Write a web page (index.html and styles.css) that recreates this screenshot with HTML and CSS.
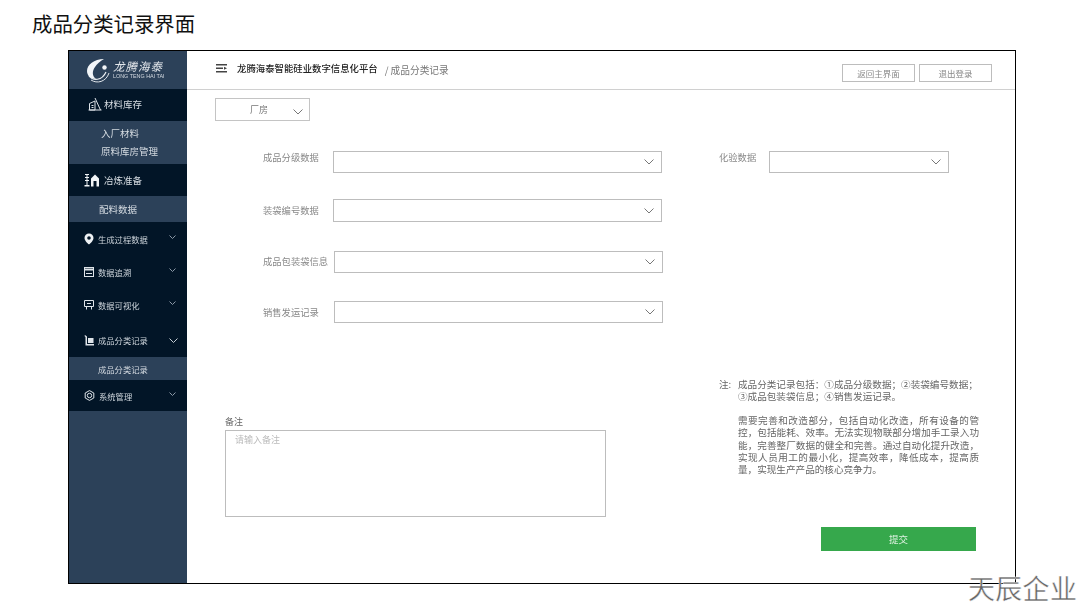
FILE: index.html
```html
<!DOCTYPE html>
<html lang="zh">
<head>
<meta charset="utf-8">
<title>成品分类记录界面</title>
<link rel="stylesheet" href="styles.css">
</head>
<body>
<h1 class="page-title">成品分类记录界面</h1>
<div class="frame">
  <aside class="sidebar">
    <div class="logo">
      <svg class="logo-mark" width="24" height="26" viewBox="0 0 24 26" fill="none">
        <path d="M18 1C8 1 1 7 1 13C1 18 5 21 10 21C6 18 6 13 9 9C11 6 14 3 18 1Z" fill="#f2f5f8"/>
        <path d="M3 18C7 23 16 23 20 14" stroke="#eef1f4" stroke-width="1.200"/>
        <path d="M5 22C11 26 20 24 23 15" stroke="#dfe4e9" stroke-width="1"/>
        <circle cx="18.500" cy="9.500" r="2.200" fill="#f2f5f8"/>
      </svg>
      <div class="logo-text">
        <div class="logo-cn">龙腾海泰</div>
        <div class="logo-en">LONG TENG HAI TAI</div>
      </div>
    </div>
    <div class="nav-head">
      <svg width="14" height="14" viewBox="0 0 14 14" fill="none" stroke="#dfe4e9" stroke-width="1"><path d="M1.500 13V6.500L7 4V13ZM0.500 13H13.500M7 1L12.500 13M3.500 8.500H5.500M3.500 10.500H5.500"/></svg>
      <span>材料库存</span>
    </div>
    <div class="nav-sub nav-sub-two">
      <div>入厂材料</div>
      <div>原料库房管理</div>
    </div>
    <div class="nav-head nav-head-b">
      <svg width="16" height="14" viewBox="0 0 16 14" fill="#f2f5f8"><path d="M1 1H5V2H1ZM1 4H5V5H1ZM1 7H5V8H1ZM0.500 12H5.500V13.500H0.500ZM2.500 2H3.500V12H2.500ZM7 5.500L11 1.500L15 5.500V13.500H12.500V8H9.500V13.500H7Z"/></svg>
      <span>冶炼准备</span>
    </div>
    <div class="nav-sub nav-sub-one">配料数据</div>
    <div class="nav-group">
      <div class="nav-item">
        <svg width="10" height="12" viewBox="0 0 10 12"><path d="M5 0.500A4.500 4.500 0 0 0 0.500 5C0.500 8 5 11.500 5 11.500S9.500 8 9.500 5A4.500 4.500 0 0 0 5 0.500ZM5 3.200A1.800 1.800 0 1 1 5 6.800A1.800 1.800 0 0 1 5 3.200Z" fill="#eef1f4" fill-rule="evenodd"/></svg>
        <span>生成过程数据</span>
        <svg class="chev" width="7" height="4" viewBox="0 0 7 4" fill="none" stroke="#8b98a6"><path d="M0.500 0.500L3.500 3.500L6.500 0.500"/></svg>
      </div>
      <div class="nav-item">
        <svg width="10" height="10" viewBox="0 0 10 10" fill="none" stroke="#dfe4e9"><rect x="0.500" y="0.500" width="9" height="9"/><path d="M0.500 2.500H9.500" stroke-width="2"/><path d="M2 6.500H8"/></svg>
        <span>数据追溯</span>
        <svg class="chev" width="7" height="4" viewBox="0 0 7 4" fill="none" stroke="#8b98a6"><path d="M0.500 0.500L3.500 3.500L6.500 0.500"/></svg>
      </div>
      <div class="nav-item">
        <svg width="10" height="10" viewBox="0 0 10 10" fill="none" stroke="#dfe4e9"><path d="M0.500 0.500H9.500V6.500H0.500ZM2.500 6.500V9.500M7.500 6.500V9.500M3 3.500H7"/></svg>
        <span>数据可视化</span>
        <svg class="chev" width="7" height="4" viewBox="0 0 7 4" fill="none" stroke="#8b98a6"><path d="M0.500 0.500L3.500 3.500L6.500 0.500"/></svg>
      </div>
      <div class="nav-item nav-item-open">
        <svg width="10" height="11" viewBox="0 0 10 11"><path d="M1 0L3 1.500V9H10V10.500H1.500V2L0.500 1ZM4 3H9.500V8H4Z" fill="#dfe4e9"/></svg>
        <span>成品分类记录</span>
        <svg class="chev chev-big" width="9" height="5" viewBox="0 0 9 5" fill="none" stroke="#c5ccd3"><path d="M0.500 0.500L4.500 4.500L8.500 0.500"/></svg>
      </div>
    </div>
    <div class="nav-sub nav-sub-current">成品分类记录</div>
    <div class="nav-group nav-group-last">
      <div class="nav-item">
        <svg width="11" height="11" viewBox="0 0 11 11" fill="none" stroke="#dfe4e9"><path d="M5.500 0.600L9.800 3V8L5.500 10.400L1.200 8V3Z"/><circle cx="5.500" cy="5.500" r="2.200"/></svg>
        <span>系统管理</span>
        <svg class="chev" width="7" height="4" viewBox="0 0 7 4" fill="none" stroke="#8b98a6"><path d="M0.500 0.500L3.500 3.500L6.500 0.500"/></svg>
      </div>
    </div>
  </aside>
  <main class="main">
    <header class="topbar">
      <svg class="menu-icon" width="11" height="9" viewBox="0 0 11 9" fill="#444"><path d="M0 0H11V1.500H0ZM0 3.500H7V5H0ZM0 7H11V8.500H0ZM8 2.800L11 4.300L8 5.700Z"/></svg>
      <span class="platform">龙腾海泰智能硅业数字信息化平台</span>
      <span class="crumb">/ 成品分类记录</span>
      <div class="top-actions">
        <button class="top-btn top-btn-a">返回主界面</button>
        <button class="top-btn top-btn-b">退出登录</button>
      </div>
    </header>
    <div class="content">
      <div class="factory">
        <span>厂房</span>
        <svg class="caret" width="10" height="6" viewBox="0 0 10 6" fill="none" stroke="#777"><path d="M0.500 0.500L5 5L9.500 0.500"/></svg>
      </div>
      <div class="form-area">
        <div class="left-fields">
          <div class="field f1"><label>成品分级数据</label><div class="select wide"><svg class="caret" width="10" height="6" viewBox="0 0 10 6" fill="none" stroke="#777"><path d="M0.500 0.500L5 5L9.500 0.500"/></svg></div></div>
          <div class="field f2"><label>装袋编号数据</label><div class="select wide"><svg class="caret" width="10" height="6" viewBox="0 0 10 6" fill="none" stroke="#777"><path d="M0.500 0.500L5 5L9.500 0.500"/></svg></div></div>
          <div class="field f3"><label>成品包装袋信息</label><div class="select wide"><svg class="caret" width="10" height="6" viewBox="0 0 10 6" fill="none" stroke="#777"><path d="M0.500 0.500L5 5L9.500 0.500"/></svg></div></div>
          <div class="field f4"><label>销售发运记录</label><div class="select wide"><svg class="caret" width="10" height="6" viewBox="0 0 10 6" fill="none" stroke="#777"><path d="M0.500 0.500L5 5L9.500 0.500"/></svg></div></div>
        </div>
        <div class="right-field">
          <label>化验数据</label>
          <div class="select narrow"><svg class="caret" width="10" height="6" viewBox="0 0 10 6" fill="none" stroke="#777"><path d="M0.500 0.500L5 5L9.500 0.500"/></svg></div>
        </div>
      </div>
      <div class="lower">
        <div class="remark">
          <div class="remark-label">备注</div>
          <div class="remark-box">请输入备注</div>
        </div>
        <div class="side-notes">
          <div class="note">
            <span class="note-mark">注:</span>
            <div class="note-body">
              <p class="note-lead">成品分类记录包括：①成品分级数据；②装袋编号数据；<br>③成品包装袋信息；④销售发运记录。</p>
              <p class="note-gap">需要完善和改造部分，包括自动化改造，所有设备的管控，包括能耗、效率。无法实现物联部分增加手工录入功能，完善整厂数据的健全和完善。通过自动化提升改造，实现人员用工的最小化，提高效率，降低成本，提高质量，实现生产产品的核心竞争力。</p>
            </div>
          </div>
          <button class="submit">提交</button>
        </div>
      </div>
    </div>
  </main>
</div>
<div class="watermark">天辰企业</div>
</body>
</html>
```
FILE: styles.css
```css
* { box-sizing: border-box; }
html, body { margin: 0; padding: 0; }
body {
  width: 1080px;
  height: 606px;
  overflow: hidden;
  position: relative;
  background: #fff;
  font-family: "Noto Sans CJK SC", "Noto Sans", sans-serif;
  color: #333;
}
.page-title {
  margin: 0;
  padding: 9px 0 0 32px;
  height: 50px;
  font-size: 20.400px;
  line-height: 28px;
  font-weight: 400;
  color: #111;
}
.frame {
  margin-left: 68px;
  width: 948px;
  height: 534px;
  border: 1px solid #000;
  display: flex;
  background: #fff;
}
.sidebar {
  width: 118px;
  flex: none;
  background: #2c4159;
  color: #d5dbe1;
  font-size: 9px;
}
.sidebar > * { filter: blur(0.3px); }
.logo {
  height: 38px;
  display: flex;
  align-items: center;
  padding-left: 17px;
  gap: 3px;
}
.logo-mark { flex: none; margin-top: 2px; }
.logo-cn {
  font-size: 11.500px;
  font-style: italic;
  line-height: 13px;
  letter-spacing: 1px;
  color: #e3e7eb;
}
.logo-en {
  font-family: "Liberation Sans", sans-serif;
  font-size: 5.400px;
  line-height: 7px;
  color: #d5dbe1;
  white-space: nowrap;
}
.nav-head {
  height: 32px;
  background: #021527;
  display: flex;
  align-items: center;
  padding: 0 0 2px 19px;
  gap: 2px;
  font-size: 9.500px;
}
.nav-head-b { padding: 0 0 0 15px; gap: 4px; }
.nav-sub { background: #2c4159; }
.nav-sub-two {
  height: 43px;
  padding: 3px 0 0 32px;
  line-height: 18px;
  font-size: 9.500px;
}
.nav-sub-one {
  height: 26px;
  padding-left: 30px;
  line-height: 26px;
  font-size: 9.500px;
}
.nav-group {
  background: #021527;
  height: 135px;
  padding-top: 1px;
}
.nav-group-last { height: 31px; padding-top: 0; }
.nav-item {
  height: 33px;
  display: flex;
  align-items: center;
  padding: 0 11px 2px 15px;
  font-size: 8.300px;
  gap: 4px;
  color: #cdd4db;
}
.nav-item span { flex: 1; min-width: 0; }
.nav-item-open { height: 36px; padding-top: 1px; padding-bottom: 1px; }
.chev { margin-bottom: 4px; }
.chev-big { margin-bottom: 0; margin-right: -2px; }
.nav-sub-current {
  height: 23px;
  padding-left: 29px;
  line-height: 24px;
  font-size: 8.300px;
}
.main {
  flex: 1;
  min-width: 0;
  display: flex;
  flex-direction: column;
}
.topbar {
  height: 39px;
  flex: none;
  display: flex;
  align-items: center;
  border-bottom: 1px solid #d0d0d0;
  padding-left: 29px;
  filter: blur(0.3px);
}
.menu-icon { flex: none; margin-right: 10px; margin-top: -3px; }
.platform {
  font-size: 9.400px;
  color: #222;
  font-weight: 500;
  margin-top: -4px;
}
.crumb {
  font-size: 9.700px;
  color: #777;
  margin-left: 7px;
  margin-top: -1px;
}
.top-actions {
  margin-left: auto;
  margin-right: 23px;
  display: flex;
  gap: 4px;
  margin-top: 5px;
}
.top-btn {
  height: 18px;
  border: 1px solid #bdbdbd;
  background: #fff;
  color: #888;
  font-family: inherit;
  font-size: 8.500px;
  padding: 0;
}
.top-btn-a { width: 73px; }
.top-btn-b { width: 73px; }
.content {
  flex: 1;
  position: relative;
  padding: 8px 0 0 28px;
  filter: blur(0.3px);
}
.factory {
  width: 95px;
  height: 23px;
  border: 1px solid #c4c4c4;
  display: flex;
  align-items: center;
  padding-left: 34px;
  font-size: 9px;
  color: #777;
}
.factory .caret { margin-left: 25px; margin-top: 4px; }
.form-area {
  display: flex;
  margin-top: 30px;
}
.left-fields { width: 484px; flex: none; margin-left: 20px; }
.field {
  display: flex;
  align-items: center;
  height: 22px;
  font-size: 9.300px;
  color: #888;
}
.field label { width: 98px; flex: none; white-space: nowrap; padding-left: 28px; }
.f1 label { margin-top: -10px; }
.f2 { margin-top: 26px; height: 23px; }
.f2 label { margin-top: -2px; }
.f3 { margin-top: 29px; }
.f4 { margin-top: 28px; }
.f3 label { width: 99px; margin-top: -2px; }
.f4 label { width: 99px; }
.select {
  height: 100%;
  border: 1px solid #bdbdbd;
  display: flex;
  align-items: center;
  justify-content: flex-end;
  background: #fff;
}
.wide { width: 329px; padding-right: 7px; }
.narrow { width: 180px; height: 22px; padding-right: 7px; }
.right-field {
  display: flex;
  align-items: flex-start;
  font-size: 9.300px;
  color: #888;
  height: 22px;
}
.right-field label { width: 50px; flex: none; line-height: 12px; }
.lower {
  display: flex;
  margin-top: 55px;
  align-items: flex-start;
}
.remark { width: 494px; flex: none; margin-left: 10px; padding-top: 39px; }
.remark-label { font-size: 9px; line-height: 9px; color: #666; height: 13px; }
.remark-box {
  width: 381px;
  height: 87px;
  border: 1px solid #bdbdbd;
  padding: 2px 9px;
  font-size: 9px;
  line-height: 14px;
  color: #bbb;
}
.side-notes { width: 258px; flex: none; }
.note { display: flex; font-size: 9.600px; line-height: 12.400px; color: #666; }
.note-mark { width: 19px; flex: none; }
.note-body { width: 241px; flex: none; }
.note-body p { margin: 0; text-align: justify; }
.note-lead { white-space: nowrap; }
.note-gap { margin-top: 11px !important; }
.submit {
  display: block;
  margin: 51px 0 0 102px;
  width: 155px;
  height: 24px;
  border: 0;
  background: #36a84c;
  color: #dff2e2;
  font-family: inherit;
  font-size: 9.500px;
}
.watermark {
  position: absolute;
  left: 968px;
  top: 570px;
  font-size: 27px;
  line-height: 36px;
  letter-spacing: 0.300px;
  color: #666;
  -webkit-text-stroke: 0.4px #fff;
  white-space: nowrap;
}
```
